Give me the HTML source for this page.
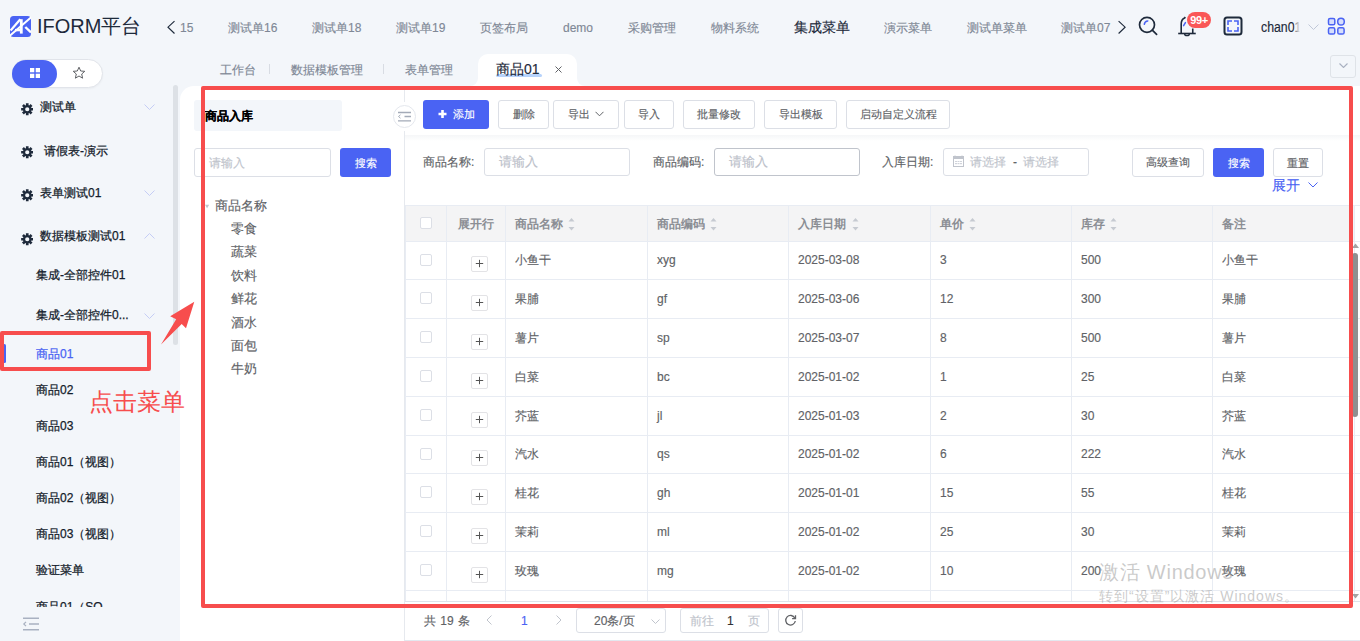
<!DOCTYPE html>
<html><head><meta charset="utf-8">
<style>
*{box-sizing:border-box;margin:0;padding:0}
html,body{width:1360px;height:641px;overflow:hidden}
body{background:#f3f6fa;font-family:"Liberation Sans",sans-serif;font-size:12px;color:#606266;position:relative;-webkit-text-stroke-width:0.15px}
.a{position:absolute;white-space:nowrap}
.nav{top:17px;height:22px;line-height:22px;color:#7f8896;font-size:12px}
.btn{position:absolute;top:100px;height:29px;line-height:26px;border:1px solid #dcdfe6;border-radius:3px;background:#fff;color:#606266;text-align:center;font-size:11px}
.inp{position:absolute;height:28px;border:1px solid #dcdfe6;border-radius:3px;background:#fff;color:#c0c4cc;line-height:26px;font-size:12px}
.lbl{position:absolute;color:#606266;font-size:12px;line-height:28px;top:148px}
.sm{position:absolute;left:0;width:172px;height:36px;line-height:36px;color:#1e2a3b;font-size:12px;white-space:nowrap;color:#141c2b;-webkit-text-stroke-width:0.25px}
.gear{position:absolute;left:20.5px;width:12.5px;height:12.5px}
.chev{position:absolute;left:144px;width:11px;height:6px}
.tree{position:absolute;left:231px;color:#606266;font-size:13px;line-height:20px}
</style></head><body>

<!-- header -->
<svg class="a" style="left:10px;top:16px" width="21" height="21" viewBox="0 0 21 21">
 <rect x="0" y="0" width="21" height="21" rx="3.5" fill="#4a63f3"/>
 <g fill="none" stroke="#fff">
 <path d="M0.6 14.6 L10.3 3.2" stroke-width="2.2"/>
 <path d="M11.3 3.2 V17.6" stroke-width="2.8"/>
 <path d="M5 14.1 H10.5" stroke-width="2.4"/>
 <path d="M-0.5 20 L21.5 1" stroke-width="2"/>
 <path d="M15.3 11 L21 16.5" stroke-width="2.4"/>
 </g>
</svg>
<div class="a" style="left:37px;top:13px;font-size:20px;line-height:26px;color:#1e2a3b;-webkit-text-stroke-width:0">IFORM平台</div>

<svg class="a" style="left:165px;top:18px" width="12" height="18" viewBox="0 0 12 18"><path d="M9.5 3.1 L3 9.2 L9.5 15.5" fill="none" stroke="#1e2a3b" stroke-width="1.15"/></svg>
<div class="a nav" style="left:180px">15</div>
<div class="a nav" style="left:228px">测试单16</div>
<div class="a nav" style="left:312px">测试单18</div>
<div class="a nav" style="left:396px">测试单19</div>
<div class="a nav" style="left:480px">页签布局</div>
<div class="a nav" style="left:563px">demo</div>
<div class="a nav" style="left:628px">采购管理</div>
<div class="a nav" style="left:711px">物料系统</div>
<div class="a nav" style="left:794px;top:16px;font-size:14px;font-weight:500;color:#1e2a3b">集成菜单</div>
<div class="a nav" style="left:884px">演示菜单</div>
<div class="a nav" style="left:967px">测试单菜单</div>
<div class="a nav" style="left:1061px">测试单07</div>
<svg class="a" style="left:1116px;top:18px" width="12" height="18" viewBox="0 0 12 18"><path d="M2.6 3.1 L9.1 9.2 L2.6 15.5" fill="none" stroke="#1e2a3b" stroke-width="1.15"/></svg>


<!-- header icons -->
<svg class="a" style="left:1136px;top:14px" width="24" height="24" viewBox="0 0 24 24">
 <circle cx="11" cy="10.8" r="7.5" fill="none" stroke="#1e2a3b" stroke-width="1.7"/>
 <path d="M16.3 16.2 L20.6 20.4" stroke="#1e2a3b" stroke-width="1.7" stroke-linecap="round"/>
 <path d="M8.3 10.3 A3.8 3.8 0 0 1 11.8 6.9" fill="none" stroke="#4a63f3" stroke-width="1.5" stroke-linecap="round"/>
</svg>
<svg class="a" style="left:1176px;top:14px" width="24" height="24" viewBox="0 0 24 24">
 <path d="M5.2 19.5 V10 Q5.2 5.6 8.6 4 L9.3 3" fill="none" stroke="#1e2a3b" stroke-width="1.6"/>
 <path d="M16.75 14.5 V19.5" fill="none" stroke="#1e2a3b" stroke-width="1.6"/>
 <path d="M2.2 19.5 H19.75" stroke="#1e2a3b" stroke-width="1.6"/>
 <path d="M8.7 20 A2.3 1.6 0 0 0 13.3 20" fill="none" stroke="#1e2a3b" stroke-width="1.5"/>
 <path d="M7.6 11.6 L9.4 8.6" fill="none" stroke="#4a63f3" stroke-width="1.5" stroke-linecap="round"/>
</svg>
<div class="a" style="left:1187px;top:12px;width:24px;height:16px;border-radius:8px;background:#f65b5b;color:#fff;font-size:11px;line-height:16px;text-align:center;letter-spacing:-0.4px;font-weight:bold;background:#fa5757;-webkit-text-stroke-width:0">99+</div>
<svg class="a" style="left:1222px;top:15px" width="22" height="22" viewBox="0 0 22 22">
 <rect x="2.5" y="2.5" width="17" height="17" rx="2.5" fill="none" stroke="#1e2a3b" stroke-width="2"/>
 <path d="M6 10 V6 H10 M12 6 H16 V10 M16 12 V16 H12 M10 16 H6 V12" fill="none" stroke="#4a63f3" stroke-width="1.6"/>
</svg>
<div class="a" style="left:1261px;top:16px;height:22px;line-height:22px;font-size:14px;color:#1e2a3b;transform:scaleX(0.88);transform-origin:0 0">chan01</div><div class="a" style="left:1294px;top:16px;width:12px;height:22px;background:linear-gradient(90deg,rgba(243,246,250,0.2),#f3f6fa 50%)"></div>
<svg class="a" style="left:1308px;top:24px" width="11" height="7" viewBox="0 0 11 7"><path d="M0.5 0.5 L5.5 5.5 L10.5 0.5" fill="none" stroke="#c0c8d8" stroke-width="1"/></svg>
<svg class="a" style="left:1327px;top:17px" width="19" height="19" viewBox="0 0 19 19">
 <g fill="#d6defc" stroke="#4a63f3" stroke-width="1.5">
 <rect x="1.5" y="1.5" width="6.3" height="6.3" rx="1.6"/>
 <circle cx="14" cy="4.65" r="3.3"/>
 <rect x="1.5" y="10.8" width="6.3" height="6.3" rx="1.6"/>
 <rect x="10.8" y="10.8" width="6.3" height="6.3" rx="1.6"/>
 </g>
</svg>

<!-- tab bar -->
<div class="a" style="left:220px;top:60px;line-height:20px;color:#7f8896">工作台</div>
<div class="a" style="left:269px;top:64px;width:1px;height:10px;background:#d8dce3"></div>
<div class="a" style="left:291px;top:60px;line-height:20px;color:#7f8896">数据模板管理</div>
<div class="a" style="left:383px;top:64px;width:1px;height:10px;background:#d8dce3"></div>
<div class="a" style="left:405px;top:60px;line-height:20px;color:#7f8896">表单管理</div>
<div class="a" style="left:470px;top:78px;width:8px;height:8px;background:#fff"></div><div class="a" style="left:462px;top:70px;width:16px;height:16px;border-radius:50%;background:#f3f6fa"></div>
<div class="a" style="left:577px;top:78px;width:8px;height:8px;background:#fff"></div><div class="a" style="left:577px;top:70px;width:16px;height:16px;border-radius:50%;background:#f3f6fa"></div>
<div class="a" style="left:478px;top:54px;width:99px;height:34px;background:#fff;border-radius:10px 10px 0 0"></div>
<div class="a" style="left:496px;top:74px;width:46px;height:3px;border-radius:2px;background:#b7d3fb"></div>
<div class="a" style="left:496px;top:59px;line-height:20px;font-size:14px;color:#1e2a3b">商品01</div>
<svg class="a" style="left:555px;top:66px" width="7" height="7" viewBox="0 0 7 7"><path d="M0.5 0.5 L6.5 6.5 M6.5 0.5 L0.5 6.5" stroke="#606266" stroke-width="1"/></svg>
<div class="a" style="left:1330px;top:55px;width:26px;height:23px;border:1px solid #dfe3e8;border-radius:3px"></div>
<svg class="a" style="left:1339px;top:63px" width="9" height="5" viewBox="0 0 9 5"><path d="M0.5 0.5 L4.5 4.5 L8.5 0.5" fill="none" stroke="#a8b0c0" stroke-width="1.1"/></svg>

<!-- main white panel -->
<div class="a" style="left:180px;top:86px;width:1180px;height:555px;background:#fff;border-top-left-radius:14px"></div>


<!-- sidebar -->
<div class="a" style="left:12px;top:59px;width:91px;height:29px;border-radius:14.5px;background:#fff;border:1px solid #e1e4ea;box-shadow:0 1px 2px rgba(0,0,0,0.04)"></div>
<div class="a" style="left:12px;top:60px;width:45px;height:28px;border-radius:14px;background:#4a63f3"></div>
<svg class="a" style="left:29px;top:67px" width="12" height="12" viewBox="0 0 12 12"><g fill="#fff"><rect x="1" y="1" width="4.3" height="4.3"/><rect x="6.7" y="1" width="4.3" height="4.3"/><rect x="1" y="6.7" width="4.3" height="4.3"/><rect x="6.7" y="6.7" width="4.3" height="4.3"/></g></svg>
<svg class="a" style="left:72px;top:66px" width="14" height="14" viewBox="0 0 14 14"><path d="M7 1.2 L8.7 5 L12.8 5.3 L9.7 8 L10.6 12.2 L7 10 L3.4 12.2 L4.3 8 L1.2 5.3 L5.3 5 Z" fill="none" stroke="#606266" stroke-width="1" stroke-linejoin="round"/></svg>
<div class="a" style="left:173px;top:85px;width:5px;height:260px;border-radius:3px;background:#dde1e6"></div>
<svg class="gear" style="top:103px" viewBox="0 0 12.5 12.5"><path fill="#1e2a3b" fill-rule="evenodd" d="M10.36 4.98 L12.35 4.89 L12.35 7.61 L10.36 7.52 L10.30 7.93 L10.05 8.26 L11.53 9.60 L9.60 11.53 L8.26 10.05 L7.93 10.30 L7.52 10.36 L7.61 12.35 L4.89 12.35 L4.98 10.36 L4.57 10.30 L4.24 10.05 L2.90 11.53 L0.97 9.60 L2.45 8.26 L2.20 7.93 L2.14 7.52 L0.15 7.61 L0.15 4.89 L2.14 4.98 L2.20 4.57 L2.45 4.24 L0.97 2.90 L2.90 0.97 L4.24 2.45 L4.57 2.20 L4.98 2.14 L4.89 0.15 L7.61 0.15 L7.52 2.14 L7.93 2.20 L8.26 2.45 L9.60 0.97 L11.53 2.90 L10.05 4.24 L10.30 4.57Z M4.15 6.25 a2.1 2.1 0 1 0 4.2 0 a2.1 2.1 0 1 0 -4.2 0Z"/></svg><div class="sm" style="top:89px;left:40px">测试单</div><svg class="chev" style="top:104px" viewBox="0 0 11 6"><path d="M0.5 0.5 L5.5 5.5 L10.5 0.5" fill="none" stroke="#c5cdf5" stroke-width="1"/></svg><svg class="gear" style="top:146px" viewBox="0 0 12.5 12.5"><path fill="#1e2a3b" fill-rule="evenodd" d="M10.36 4.98 L12.35 4.89 L12.35 7.61 L10.36 7.52 L10.30 7.93 L10.05 8.26 L11.53 9.60 L9.60 11.53 L8.26 10.05 L7.93 10.30 L7.52 10.36 L7.61 12.35 L4.89 12.35 L4.98 10.36 L4.57 10.30 L4.24 10.05 L2.90 11.53 L0.97 9.60 L2.45 8.26 L2.20 7.93 L2.14 7.52 L0.15 7.61 L0.15 4.89 L2.14 4.98 L2.20 4.57 L2.45 4.24 L0.97 2.90 L2.90 0.97 L4.24 2.45 L4.57 2.20 L4.98 2.14 L4.89 0.15 L7.61 0.15 L7.52 2.14 L7.93 2.20 L8.26 2.45 L9.60 0.97 L11.53 2.90 L10.05 4.24 L10.30 4.57Z M4.15 6.25 a2.1 2.1 0 1 0 4.2 0 a2.1 2.1 0 1 0 -4.2 0Z"/></svg><div class="sm" style="top:133px;left:44px">请假表-演示</div><svg class="gear" style="top:189px" viewBox="0 0 12.5 12.5"><path fill="#1e2a3b" fill-rule="evenodd" d="M10.36 4.98 L12.35 4.89 L12.35 7.61 L10.36 7.52 L10.30 7.93 L10.05 8.26 L11.53 9.60 L9.60 11.53 L8.26 10.05 L7.93 10.30 L7.52 10.36 L7.61 12.35 L4.89 12.35 L4.98 10.36 L4.57 10.30 L4.24 10.05 L2.90 11.53 L0.97 9.60 L2.45 8.26 L2.20 7.93 L2.14 7.52 L0.15 7.61 L0.15 4.89 L2.14 4.98 L2.20 4.57 L2.45 4.24 L0.97 2.90 L2.90 0.97 L4.24 2.45 L4.57 2.20 L4.98 2.14 L4.89 0.15 L7.61 0.15 L7.52 2.14 L7.93 2.20 L8.26 2.45 L9.60 0.97 L11.53 2.90 L10.05 4.24 L10.30 4.57Z M4.15 6.25 a2.1 2.1 0 1 0 4.2 0 a2.1 2.1 0 1 0 -4.2 0Z"/></svg><div class="sm" style="top:175px;left:40px">表单测试01</div><svg class="chev" style="top:190px" viewBox="0 0 11 6"><path d="M0.5 0.5 L5.5 5.5 L10.5 0.5" fill="none" stroke="#c5cdf5" stroke-width="1"/></svg><svg class="gear" style="top:233px" viewBox="0 0 12.5 12.5"><path fill="#1e2a3b" fill-rule="evenodd" d="M10.36 4.98 L12.35 4.89 L12.35 7.61 L10.36 7.52 L10.30 7.93 L10.05 8.26 L11.53 9.60 L9.60 11.53 L8.26 10.05 L7.93 10.30 L7.52 10.36 L7.61 12.35 L4.89 12.35 L4.98 10.36 L4.57 10.30 L4.24 10.05 L2.90 11.53 L0.97 9.60 L2.45 8.26 L2.20 7.93 L2.14 7.52 L0.15 7.61 L0.15 4.89 L2.14 4.98 L2.20 4.57 L2.45 4.24 L0.97 2.90 L2.90 0.97 L4.24 2.45 L4.57 2.20 L4.98 2.14 L4.89 0.15 L7.61 0.15 L7.52 2.14 L7.93 2.20 L8.26 2.45 L9.60 0.97 L11.53 2.90 L10.05 4.24 L10.30 4.57Z M4.15 6.25 a2.1 2.1 0 1 0 4.2 0 a2.1 2.1 0 1 0 -4.2 0Z"/></svg><div class="sm" style="top:218px;left:40px">数据模板测试01</div><svg class="chev" style="top:233px" viewBox="0 0 11 6"><path d="M0.5 5.5 L5.5 0.5 L10.5 5.5" fill="none" stroke="#c5cdf5" stroke-width="1"/></svg><div class="sm" style="top:257px;left:36px">集成-全部控件01</div><div class="sm" style="top:297px;left:36px">集成-全部控件0...</div><svg class="chev" style="top:313px" viewBox="0 0 11 6"><path d="M0.5 0.5 L5.5 5.5 L10.5 0.5" fill="none" stroke="#c5cdf5" stroke-width="1"/></svg><div class="a" style="left:3px;top:344px;width:3px;height:19px;border-radius:2px;background:#4a63f3"></div><div class="sm" style="top:336px;left:36px;color:#4a63f3">商品01</div><div class="sm" style="top:372px;left:36px">商品02</div><div class="sm" style="top:408px;left:36px">商品03</div><div class="sm" style="top:444px;left:36px">商品01（视图）</div><div class="sm" style="top:480px;left:36px">商品02（视图）</div><div class="sm" style="top:516px;left:36px">商品03（视图）</div><div class="sm" style="top:552px;left:36px">验证菜单</div><div class="a" style="left:0;top:588px;width:172px;height:19px;overflow:hidden"><div class="sm" style="top:1px;left:36px">商品01（SQ</div></div><svg class="a" style="left:22px;top:617px" width="18" height="14" viewBox="0 0 18 14"><g stroke="#a9b1c1" stroke-width="1.6" fill="none"><path d="M1 1.2 H17 M7 7 H17 M1 12.8 H17"/><path d="M4 4.8 L1.8 7 L4 9.2" stroke-width="1.2"/></g></svg>

<!-- tree panel -->
<div class="a" style="left:194px;top:100px;width:148px;height:31px;border-radius:3px;background:#f3f6fa"></div>
<div class="a" style="left:205px;top:106px;line-height:20px;font-size:12px;font-weight:bold;color:#000">商品入库</div>
<div class="inp" style="left:194px;top:148px;width:137px;height:29px;padding-left:14px;line-height:28px">请输入</div>
<div class="a" style="left:340px;top:148px;width:51px;height:29px;border-radius:3px;background:#4a63f3;color:#fff;text-align:center;line-height:31px;font-size:11px">搜索</div>
<svg class="a" style="left:205px;top:204px" width="5" height="5" viewBox="0 0 6 5"><path d="M0 0.5 H5 L2.5 4.5 Z" fill="#c0c4cc"/></svg>
<div class="a tree" style="left:215px;top:196px">商品名称</div>
<div class="a tree" style="top:219px">零食</div><div class="a tree" style="top:242px">蔬菜</div><div class="a tree" style="top:266px">饮料</div><div class="a tree" style="top:289px">鲜花</div><div class="a tree" style="top:313px">酒水</div><div class="a tree" style="top:336px">面包</div><div class="a tree" style="top:359px">牛奶</div>
<div class="a" style="left:404px;top:86px;width:1px;height:555px;background:#e6e9ee"></div>
<div class="a" style="left:401px;top:102px;width:7px;height:29px;background:#fff"></div><div class="a" style="left:393px;top:105px;width:23px;height:23px;border-radius:50%;background:#fff;border:1px solid #e4e7ed"></div>
<svg class="a" style="left:397px;top:111px" width="16" height="12" viewBox="0 0 16 12"><g stroke="#a4abb8" fill="none"><path d="M1 1.5 H14 M7.5 5.5 H14 M1 9.8 H14" stroke-width="1.3"/><path d="M3.5 3.8 L1.5 5.5 L3.5 7.2" stroke-width="1"/></g></svg>

<!-- toolbar -->
<div class="a" style="left:423px;top:100px;width:66px;height:29px;border-radius:3px;background:#4a63f3;color:#fff;line-height:28px;font-size:11px;padding-left:30px">添加</div><svg class="a" style="left:438px;top:110px" width="9" height="8" viewBox="0 0 9 8"><path d="M4.5 0 V8 M0.5 4 H8.5" stroke="#fff" stroke-width="2.6"/></svg>
<div class="btn" style="left:498px;width:51px">删除</div>
<div class="btn" style="left:553px;width:66px;text-align:left;padding-left:14px">导出</div><svg class="a" style="left:595px;top:111px" width="9" height="6" viewBox="0 0 9 6"><path d="M0.5 0.8 L4.5 4.8 L8.5 0.8" fill="none" stroke="#606266" stroke-width="1"/></svg>
<div class="btn" style="left:624px;width:50px">导入</div>
<div class="btn" style="left:683px;width:72px">批量修改</div>
<div class="btn" style="left:764px;width:73px">导出模板</div>
<div class="btn" style="left:846px;width:104px">启动自定义流程</div>
<div class="a" style="left:405px;top:135px;width:955px;height:6px;background:linear-gradient(#f5f6f8,#fff)"></div>

<!-- search form -->
<div class="lbl" style="left:423px">商品名称:</div>
<div class="inp" style="left:484px;top:148px;width:146px;padding-left:14px;font-size:13px;line-height:25px;color:#bcc1ca">请输入</div>
<div class="lbl" style="left:653px">商品编码:</div>
<div class="inp" style="left:714px;top:148px;width:146px;padding-left:14px;border-color:#c0c4cc;font-size:13px;line-height:25px;color:#bcc1ca">请输入</div>
<div class="lbl" style="left:882px">入库日期:</div>
<div class="inp" style="left:943px;top:148px;width:146px;height:28px"></div>
<svg class="a" style="left:952px;top:155px" width="13" height="13" viewBox="0 0 13 13"><g fill="none" stroke="#c0c4cc" stroke-width="1"><rect x="1.5" y="1.5" width="10" height="10"/><path d="M3 0.5 V1.5 M10 0.5 V1.5"/></g><rect x="1.5" y="2" width="10" height="2" fill="#c0c4cc"/><g fill="#d0d3da"><rect x="3" y="6" width="2" height="1"/><rect x="5.5" y="6" width="2" height="1"/><rect x="8" y="6" width="2" height="1"/><rect x="3" y="8" width="2" height="1.2"/><rect x="5.5" y="8" width="2" height="1.2"/><rect x="8" y="8" width="2" height="1.2"/></g></svg>
<div class="a" style="left:970px;top:148px;line-height:28px;color:#c0c4cc">请选择</div>
<div class="a" style="left:1013px;top:148px;line-height:28px;color:#606266">-</div>
<div class="a" style="left:1023px;top:148px;line-height:28px;color:#c0c4cc">请选择</div>
<div class="btn" style="left:1132px;top:148px;width:72px;height:29px;line-height:27px">高级查询</div>
<div class="a" style="left:1213px;top:148px;width:51px;height:29px;border-radius:3px;background:#4a63f3;color:#fff;text-align:center;line-height:30px;font-size:11px">搜索</div>
<div class="btn" style="left:1273px;top:148px;width:50px;height:29px;line-height:28px">重置</div>
<div class="a" style="left:1272px;top:175px;line-height:20px;font-size:14px;color:#4a63f3">展开</div>
<svg class="a" style="left:1308px;top:182px" width="10" height="6" viewBox="0 0 10 6"><path d="M0.5 0.5 L5 5 L9.5 0.5" fill="none" stroke="#4a63f3" stroke-width="1"/></svg>


<!-- table -->
<div class="a" style="left:405px;top:206px;width:949px;height:35px;background:#f4f4f5"></div>
<div class="a" style="left:405px;top:205px;width:955px;height:1px;background:#e8ecf3"></div><div class="a" style="left:405px;top:241px;width:955px;height:1px;background:#e8ecf3"></div><div class="a" style="left:405px;top:279px;width:955px;height:1px;background:#e8ecf3"></div><div class="a" style="left:405px;top:318px;width:955px;height:1px;background:#e8ecf3"></div><div class="a" style="left:405px;top:357px;width:955px;height:1px;background:#e8ecf3"></div><div class="a" style="left:405px;top:396px;width:955px;height:1px;background:#e8ecf3"></div><div class="a" style="left:405px;top:435px;width:955px;height:1px;background:#e8ecf3"></div><div class="a" style="left:405px;top:473px;width:955px;height:1px;background:#e8ecf3"></div><div class="a" style="left:405px;top:512px;width:955px;height:1px;background:#e8ecf3"></div><div class="a" style="left:405px;top:551px;width:955px;height:1px;background:#e8ecf3"></div><div class="a" style="left:405px;top:590px;width:955px;height:1px;background:#e8ecf3"></div><div class="a" style="left:405px;top:601px;width:955px;height:1px;background:#dde3ea"></div>
<div class="a" style="left:405px;top:205px;width:1px;height:396px;background:#e8ecf3"></div><div class="a" style="left:446px;top:205px;width:1px;height:396px;background:#e8ecf3"></div><div class="a" style="left:505px;top:205px;width:1px;height:396px;background:#e8ecf3"></div><div class="a" style="left:647px;top:205px;width:1px;height:396px;background:#e8ecf3"></div><div class="a" style="left:788px;top:205px;width:1px;height:396px;background:#e8ecf3"></div><div class="a" style="left:930px;top:205px;width:1px;height:396px;background:#e8ecf3"></div><div class="a" style="left:1071px;top:205px;width:1px;height:396px;background:#e8ecf3"></div><div class="a" style="left:1212px;top:205px;width:1px;height:396px;background:#e8ecf3"></div><div class="a" style="left:1354px;top:205px;width:1px;height:396px;background:#e8ecf3"></div>
<div class="a" style="left:420px;top:217px;width:12px;height:12px;border:1px solid #dcdfe6;border-radius:2px;background:#fff"></div><div class="a" style="left:458px;top:214px;line-height:20px;font-weight:bold;color:#8b8e94;-webkit-text-stroke-width:0">展开行</div><div class="a" style="left:515px;top:214px;line-height:20px;font-weight:bold;color:#8b8e94;-webkit-text-stroke-width:0">商品名称</div><svg class="a" style="left:568px;top:217px" width="7" height="15" viewBox="0 0 7 15"><path d="M0.5 4.5 L3.5 1 L6.5 4.5Z M0.5 10 L3.5 13.5 L6.5 10Z" fill="#c6cad1"/></svg><div class="a" style="left:657px;top:214px;line-height:20px;font-weight:bold;color:#8b8e94;-webkit-text-stroke-width:0">商品编码</div><svg class="a" style="left:710px;top:217px" width="7" height="15" viewBox="0 0 7 15"><path d="M0.5 4.5 L3.5 1 L6.5 4.5Z M0.5 10 L3.5 13.5 L6.5 10Z" fill="#c6cad1"/></svg><div class="a" style="left:798px;top:214px;line-height:20px;font-weight:bold;color:#8b8e94;-webkit-text-stroke-width:0">入库日期</div><svg class="a" style="left:852px;top:217px" width="7" height="15" viewBox="0 0 7 15"><path d="M0.5 4.5 L3.5 1 L6.5 4.5Z M0.5 10 L3.5 13.5 L6.5 10Z" fill="#c6cad1"/></svg><div class="a" style="left:940px;top:214px;line-height:20px;font-weight:bold;color:#8b8e94;-webkit-text-stroke-width:0">单价</div><svg class="a" style="left:969px;top:217px" width="7" height="15" viewBox="0 0 7 15"><path d="M0.5 4.5 L3.5 1 L6.5 4.5Z M0.5 10 L3.5 13.5 L6.5 10Z" fill="#c6cad1"/></svg><div class="a" style="left:1081px;top:214px;line-height:20px;font-weight:bold;color:#8b8e94;-webkit-text-stroke-width:0">库存</div><svg class="a" style="left:1110px;top:217px" width="7" height="15" viewBox="0 0 7 15"><path d="M0.5 4.5 L3.5 1 L6.5 4.5Z M0.5 10 L3.5 13.5 L6.5 10Z" fill="#c6cad1"/></svg><div class="a" style="left:1222px;top:214px;line-height:20px;font-weight:bold;color:#8b8e94;-webkit-text-stroke-width:0">备注</div>
<div class="a" style="left:420px;top:254px;width:12px;height:12px;border:1px solid #dcdfe6;border-radius:2px;background:#fff"></div><div class="a" style="left:471px;top:256px;width:17px;height:16px;border:1px solid #e3e3e6;border-radius:2px;background:#fff"></div><svg class="a" style="left:475px;top:259px" width="9" height="9" viewBox="0 0 9 9"><path d="M0.8 4.5 H8.2 M4.5 0.8 V8.2" stroke="#555" stroke-width="1"/></svg><div class="a" style="left:515px;top:250px;line-height:20px;color:#606266">小鱼干</div><div class="a" style="left:657px;top:250px;line-height:20px;color:#606266">xyg</div><div class="a" style="left:798px;top:250px;line-height:20px;color:#606266">2025-03-08</div><div class="a" style="left:940px;top:250px;line-height:20px;color:#606266">3</div><div class="a" style="left:1081px;top:250px;line-height:20px;color:#606266">500</div><div class="a" style="left:1222px;top:250px;line-height:20px;color:#606266">小鱼干</div>
<div class="a" style="left:420px;top:292px;width:12px;height:12px;border:1px solid #dcdfe6;border-radius:2px;background:#fff"></div><div class="a" style="left:471px;top:295px;width:17px;height:16px;border:1px solid #e3e3e6;border-radius:2px;background:#fff"></div><svg class="a" style="left:475px;top:298px" width="9" height="9" viewBox="0 0 9 9"><path d="M0.8 4.5 H8.2 M4.5 0.8 V8.2" stroke="#555" stroke-width="1"/></svg><div class="a" style="left:515px;top:289px;line-height:20px;color:#606266">果脯</div><div class="a" style="left:657px;top:289px;line-height:20px;color:#606266">gf</div><div class="a" style="left:798px;top:289px;line-height:20px;color:#606266">2025-03-06</div><div class="a" style="left:940px;top:289px;line-height:20px;color:#606266">12</div><div class="a" style="left:1081px;top:289px;line-height:20px;color:#606266">300</div><div class="a" style="left:1222px;top:289px;line-height:20px;color:#606266">果脯</div>
<div class="a" style="left:420px;top:331px;width:12px;height:12px;border:1px solid #dcdfe6;border-radius:2px;background:#fff"></div><div class="a" style="left:471px;top:334px;width:17px;height:16px;border:1px solid #e3e3e6;border-radius:2px;background:#fff"></div><svg class="a" style="left:475px;top:337px" width="9" height="9" viewBox="0 0 9 9"><path d="M0.8 4.5 H8.2 M4.5 0.8 V8.2" stroke="#555" stroke-width="1"/></svg><div class="a" style="left:515px;top:328px;line-height:20px;color:#606266">薯片</div><div class="a" style="left:657px;top:328px;line-height:20px;color:#606266">sp</div><div class="a" style="left:798px;top:328px;line-height:20px;color:#606266">2025-03-07</div><div class="a" style="left:940px;top:328px;line-height:20px;color:#606266">8</div><div class="a" style="left:1081px;top:328px;line-height:20px;color:#606266">500</div><div class="a" style="left:1222px;top:328px;line-height:20px;color:#606266">薯片</div>
<div class="a" style="left:420px;top:370px;width:12px;height:12px;border:1px solid #dcdfe6;border-radius:2px;background:#fff"></div><div class="a" style="left:471px;top:373px;width:17px;height:16px;border:1px solid #e3e3e6;border-radius:2px;background:#fff"></div><svg class="a" style="left:475px;top:376px" width="9" height="9" viewBox="0 0 9 9"><path d="M0.8 4.5 H8.2 M4.5 0.8 V8.2" stroke="#555" stroke-width="1"/></svg><div class="a" style="left:515px;top:367px;line-height:20px;color:#606266">白菜</div><div class="a" style="left:657px;top:367px;line-height:20px;color:#606266">bc</div><div class="a" style="left:798px;top:367px;line-height:20px;color:#606266">2025-01-02</div><div class="a" style="left:940px;top:367px;line-height:20px;color:#606266">1</div><div class="a" style="left:1081px;top:367px;line-height:20px;color:#606266">25</div><div class="a" style="left:1222px;top:367px;line-height:20px;color:#606266">白菜</div>
<div class="a" style="left:420px;top:409px;width:12px;height:12px;border:1px solid #dcdfe6;border-radius:2px;background:#fff"></div><div class="a" style="left:471px;top:412px;width:17px;height:16px;border:1px solid #e3e3e6;border-radius:2px;background:#fff"></div><svg class="a" style="left:475px;top:415px" width="9" height="9" viewBox="0 0 9 9"><path d="M0.8 4.5 H8.2 M4.5 0.8 V8.2" stroke="#555" stroke-width="1"/></svg><div class="a" style="left:515px;top:406px;line-height:20px;color:#606266">芥蓝</div><div class="a" style="left:657px;top:406px;line-height:20px;color:#606266">jl</div><div class="a" style="left:798px;top:406px;line-height:20px;color:#606266">2025-01-03</div><div class="a" style="left:940px;top:406px;line-height:20px;color:#606266">2</div><div class="a" style="left:1081px;top:406px;line-height:20px;color:#606266">30</div><div class="a" style="left:1222px;top:406px;line-height:20px;color:#606266">芥蓝</div>
<div class="a" style="left:420px;top:448px;width:12px;height:12px;border:1px solid #dcdfe6;border-radius:2px;background:#fff"></div><div class="a" style="left:471px;top:450px;width:17px;height:16px;border:1px solid #e3e3e6;border-radius:2px;background:#fff"></div><svg class="a" style="left:475px;top:453px" width="9" height="9" viewBox="0 0 9 9"><path d="M0.8 4.5 H8.2 M4.5 0.8 V8.2" stroke="#555" stroke-width="1"/></svg><div class="a" style="left:515px;top:444px;line-height:20px;color:#606266">汽水</div><div class="a" style="left:657px;top:444px;line-height:20px;color:#606266">qs</div><div class="a" style="left:798px;top:444px;line-height:20px;color:#606266">2025-01-02</div><div class="a" style="left:940px;top:444px;line-height:20px;color:#606266">6</div><div class="a" style="left:1081px;top:444px;line-height:20px;color:#606266">222</div><div class="a" style="left:1222px;top:444px;line-height:20px;color:#606266">汽水</div>
<div class="a" style="left:420px;top:486px;width:12px;height:12px;border:1px solid #dcdfe6;border-radius:2px;background:#fff"></div><div class="a" style="left:471px;top:489px;width:17px;height:16px;border:1px solid #e3e3e6;border-radius:2px;background:#fff"></div><svg class="a" style="left:475px;top:492px" width="9" height="9" viewBox="0 0 9 9"><path d="M0.8 4.5 H8.2 M4.5 0.8 V8.2" stroke="#555" stroke-width="1"/></svg><div class="a" style="left:515px;top:483px;line-height:20px;color:#606266">桂花</div><div class="a" style="left:657px;top:483px;line-height:20px;color:#606266">gh</div><div class="a" style="left:798px;top:483px;line-height:20px;color:#606266">2025-01-01</div><div class="a" style="left:940px;top:483px;line-height:20px;color:#606266">15</div><div class="a" style="left:1081px;top:483px;line-height:20px;color:#606266">55</div><div class="a" style="left:1222px;top:483px;line-height:20px;color:#606266">桂花</div>
<div class="a" style="left:420px;top:525px;width:12px;height:12px;border:1px solid #dcdfe6;border-radius:2px;background:#fff"></div><div class="a" style="left:471px;top:528px;width:17px;height:16px;border:1px solid #e3e3e6;border-radius:2px;background:#fff"></div><svg class="a" style="left:475px;top:531px" width="9" height="9" viewBox="0 0 9 9"><path d="M0.8 4.5 H8.2 M4.5 0.8 V8.2" stroke="#555" stroke-width="1"/></svg><div class="a" style="left:515px;top:522px;line-height:20px;color:#606266">茉莉</div><div class="a" style="left:657px;top:522px;line-height:20px;color:#606266">ml</div><div class="a" style="left:798px;top:522px;line-height:20px;color:#606266">2025-01-02</div><div class="a" style="left:940px;top:522px;line-height:20px;color:#606266">25</div><div class="a" style="left:1081px;top:522px;line-height:20px;color:#606266">30</div><div class="a" style="left:1222px;top:522px;line-height:20px;color:#606266">茉莉</div>
<div class="a" style="left:420px;top:564px;width:12px;height:12px;border:1px solid #dcdfe6;border-radius:2px;background:#fff"></div><div class="a" style="left:471px;top:567px;width:17px;height:16px;border:1px solid #e3e3e6;border-radius:2px;background:#fff"></div><svg class="a" style="left:475px;top:570px" width="9" height="9" viewBox="0 0 9 9"><path d="M0.8 4.5 H8.2 M4.5 0.8 V8.2" stroke="#555" stroke-width="1"/></svg><div class="a" style="left:515px;top:561px;line-height:20px;color:#606266">玫瑰</div><div class="a" style="left:657px;top:561px;line-height:20px;color:#606266">mg</div><div class="a" style="left:798px;top:561px;line-height:20px;color:#606266">2025-01-02</div><div class="a" style="left:940px;top:561px;line-height:20px;color:#606266">10</div><div class="a" style="left:1081px;top:561px;line-height:20px;color:#606266">200</div><div class="a" style="left:1222px;top:561px;line-height:20px;color:#606266">玫瑰</div>
<svg class="a" style="left:1352px;top:243px" width="7" height="5" viewBox="0 0 7 5"><path d="M0 5 L3.5 0.5 L7 5Z" fill="#a3a3a3"/></svg><svg class="a" style="left:1352px;top:594px" width="7" height="5" viewBox="0 0 7 5"><path d="M0 0 L3.5 4.5 L7 0Z" fill="#a3a3a3"/></svg><div class="a" style="left:1352px;top:253px;width:6px;height:164px;border-radius:3px;background:#8f8f8f"></div>
<div class="a" style="left:424px;top:611px;line-height:20px;color:#606266;font-size:12px;word-spacing:1px">共 19 条</div>
<svg class="a" style="left:486px;top:615px" width="6" height="10" viewBox="0 0 6 10"><path d="M5.5 0.5 L1 5 L5.5 9.5" fill="none" stroke="#c0c4cc" stroke-width="1"/></svg>
<div class="a" style="left:521px;top:611px;line-height:20px;color:#4a63f3;font-size:12px">1</div>
<svg class="a" style="left:556px;top:615px" width="6" height="10" viewBox="0 0 6 10"><path d="M0.5 0.5 L5 5 L0.5 9.5" fill="none" stroke="#c0c4cc" stroke-width="1"/></svg>
<div class="a" style="left:576px;top:608px;width:90px;height:25px;border:1px solid #dcdfe6;border-radius:3px;background:#fff"></div>
<div class="a" style="left:594px;top:611px;line-height:20px;color:#606266;font-size:12px">20条/页</div>
<svg class="a" style="left:651px;top:619px" width="9" height="5" viewBox="0 0 9 5"><path d="M0.5 0.5 L4.5 4.5 L8.5 0.5" fill="none" stroke="#c0c4cc" stroke-width="1"/></svg>
<div class="a" style="left:680px;top:608px;width:89px;height:25px;border:1px solid #dcdfe6;border-radius:3px;background:#fff"></div>
<div class="a" style="left:690px;top:611px;line-height:20px;color:#c0c4cc;font-size:12px">前往</div>
<div class="a" style="left:727px;top:611px;line-height:20px;color:#303133;font-size:12px">1</div>
<div class="a" style="left:748px;top:611px;line-height:20px;color:#c0c4cc;font-size:12px">页</div>
<div class="a" style="left:778px;top:608px;width:25px;height:25px;border:1px solid #dcdfe6;border-radius:3px;background:#fff"></div>
<svg class="a" style="left:784px;top:614px" width="13" height="13" viewBox="0 0 13 13"><path d="M10.8 4 A4.8 4.8 0 1 0 11.3 7" fill="none" stroke="#606266" stroke-width="1.3"/><path d="M11.5 1.2 V4.6 H8.1" fill="none" stroke="#606266" stroke-width="1.3"/></svg>
<div class="a" style="left:405px;top:640px;width:955px;height:1px;background:#e3e8ef"></div>

<!-- watermark -->
<div class="a" style="left:1099px;top:559px;line-height:26px;font-size:20px;letter-spacing:0.75px;color:rgba(150,150,150,0.5);-webkit-text-stroke-width:0">激活 Windows</div>
<div class="a" style="left:1099px;top:586px;line-height:20px;font-size:14px;letter-spacing:1px;color:rgba(150,150,150,0.5);-webkit-text-stroke-width:0">转到“设置”以激活 Windows。</div>

<!-- red annotations -->
<div class="a" style="left:201px;top:86px;width:1152px;height:522px;border:4px solid #f74d4d;border-radius:2px"></div>
<div class="a" style="left:0px;top:331px;width:151px;height:40px;border:4px solid #f74d4d;border-radius:2px"></div>
<svg class="a" style="left:155px;top:295px" width="45" height="55" viewBox="155 295 45 55"><path d="M161 344.6 L176.2 319.3 L170.2 316.2 L194.3 301.8 L186 328.3 L181.7 324 Z" fill="#f74d4d"/></svg>
<div class="a" style="left:89px;top:387px;line-height:30px;font-size:24px;color:#f74d4d;-webkit-text-stroke-width:0">点击菜单</div>

</body></html>
